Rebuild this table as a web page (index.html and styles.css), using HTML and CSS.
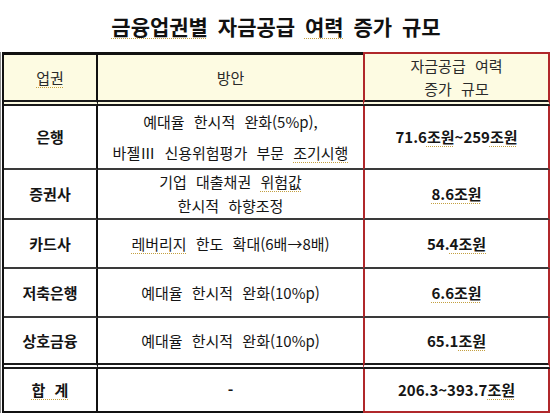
FILE: index.html
```html
<!DOCTYPE html>
<html lang="ko">
<head>
    <meta charset="UTF-8">
    <meta name="viewport" content="width=device-width, initial-scale=1.0">
    <title>금융업권별 자금공급 여력 증가 규모</title>
    <link rel="stylesheet" href="styles.css">
</head>
<body>
    <div class="page">
        <h1 class="title"><span class="sp">금융업권별</span> 자금공급 <span class="sp">여력</span> 증가 규모</h1>

        <!-- 업권별 표 -->
        <div class="sheet">
            <table class="supply-table">
                <tr class="head-row">
                    <th class="col-sector"><span class="sp">업권</span></th>
                    <th class="col-plan">방안</th>
                    <th class="col-amount">자금공급 여력<br>증가 규모</th>
                </tr>
                <tr class="row-bank">
                    <td class="col-sector">은행</td>
                    <td class="col-plan tall">예대율 한시적 완화(5%p),<br>바젤Ⅲ 신용위험평가 부문 <span class="sp">조기시행</span></td>
                    <td class="col-amount">71.6<span class="sp">조원</span>~259<span class="sp">조원</span></td>
                </tr>
                <tr class="row-std">
                    <td class="col-sector">증권사</td>
                    <td class="col-plan">기업 대출채권 <span class="sp">위험값</span><br>한시적 하향조정</td>
                    <td class="col-amount"><span class="sp">8.6조원</span></td>
                </tr>
                <tr class="row-std">
                    <td class="col-sector">카드사</td>
                    <td class="col-plan"><span class="sp">레버리지</span> 한도 확대(6배→8배)</td>
                    <td class="col-amount">54.<span class="sp">4조원</span></td>
                </tr>
                <tr class="row-std">
                    <td class="col-sector">저축은행</td>
                    <td class="col-plan">예대율 한시적 완화(10%p)</td>
                    <td class="col-amount"><span class="sp">6.6조원</span></td>
                </tr>
                <tr class="row-std row-last">
                    <td class="col-sector">상호금융</td>
                    <td class="col-plan">예대율 한시적 완화(10%p)</td>
                    <td class="col-amount">65.1<span class="sp">조원</span></td>
                </tr>
                <tr class="row-total">
                    <td class="col-sector"><span class="sp">합 계</span></td>
                    <td class="col-plan">-</td>
                    <td class="col-amount">206.3~393.7<span class="sp">조원</span></td>
                </tr>
            </table>
        </div>
    </div>
</body>
</html>
```

FILE: styles.css
```css
body {
    margin: 0;
    background-color: #fff;
    font-family: "Noto Sans CJK KR", "Noto Sans", sans-serif;
    color: #1e1e1e;
}
.page {
    width: 552px;
}
.title {
    margin: 0;
    padding-top: 13px;
    height: 39px;
    box-sizing: border-box;
    font-size: 21px;
    line-height: 26px;
    font-weight: bold;
    text-align: center;
    word-spacing: 4px;
    color: #111;
}
.sp {
    text-decoration: underline dotted #c4a040;
    text-decoration-thickness: 1px;
    text-underline-offset: 3px;
}
.sheet {
    margin-top: 13px;
    border-left: 1px solid #8a8a8a;
    padding-left: 1px;
}
.supply-table {
    border-spacing: 0;
    border-left: 2px solid #111;
    width: 548px;
    font-size: 15px;
    line-height: 24px;
    word-spacing: 5px;
    color: #151515;
}
.supply-table th,
.supply-table td {
    padding: 0;
    text-align: center;
    vertical-align: middle;
    border-bottom: 2px solid #3a3a3a;
}
.col-sector {
    width: 92px;
    border-right: 2px solid #111;
    font-weight: bold;
}
.col-plan {
    width: 265px;
}
.col-amount {
    border-left: 2px solid #b0282b;
    border-right: 2px solid #b0282b;
    font-weight: bold;
}
.head-row th {
    height: 45px;
    font-weight: normal;
    line-height: 23px;
    color: #2a2a2a;
    background-color: #fdfbe2;
    border-top: 3px solid #111;
    border-bottom: 6px double #1a1a1a;
}
.head-row th.col-amount {
    border-top: 2px solid #b0282b;
}
.row-bank td {
    height: 60px;
}
.tall {
    line-height: 31px;
}
.row-std td {
    height: 47px;
}
.row-last td {
    height: 45px;
    border-bottom: 6px double #1a1a1a;
}
.row-total td {
    height: 42px;
    border-bottom: 2px solid #111;
    font-weight: bold;
}
.row-total td.col-amount {
    border-bottom-color: #b0282b;
}
```
